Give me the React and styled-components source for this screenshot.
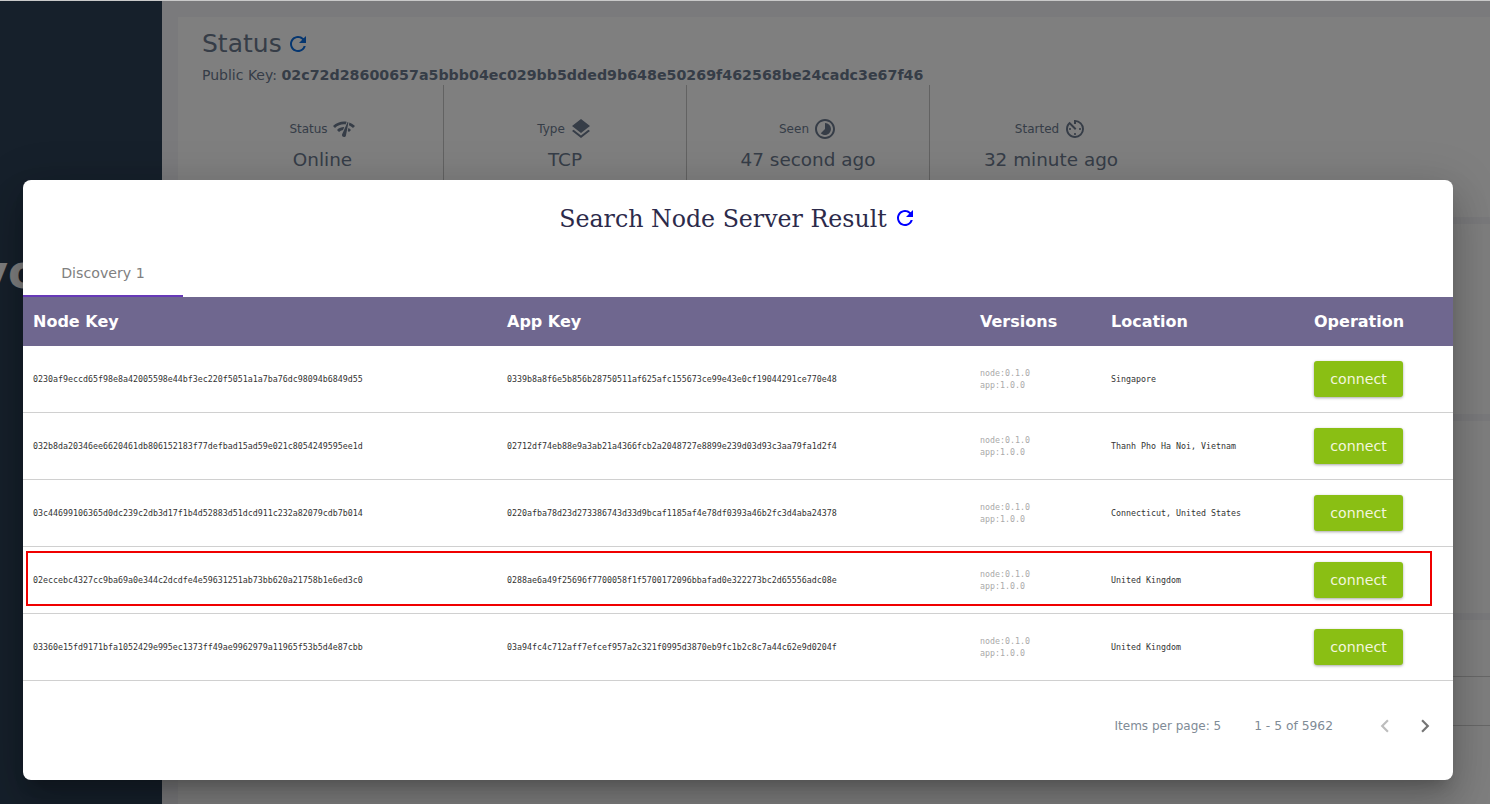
import React from 'react';
import styled, { createGlobalStyle } from 'styled-components';
import { MdRefresh, MdLayers, MdChevronLeft, MdChevronRight, MdNetworkCheck, MdTimelapse, MdAvTimer } from 'react-icons/md';

const GlobalStyle = createGlobalStyle`
  html, body {
    margin: 0;
    padding: 0;
    height: 100%;
    overflow: hidden;
    font-family: "DejaVu Sans", sans-serif;
  }
`;

const Page = styled.div`
  position: relative;
  display: flex;
  width: 1490px;
  height: 804px;
  overflow: hidden;
  background: #f4f5f8;
`;

const Sidebar = styled.aside`
  position: relative;
  width: 162px;
  flex: none;
  background: #2c4056;
`;

const BrandText = styled.div`
  position: absolute;
  left: -22px;
  top: 245px;
  font-size: 46px;
  line-height: 54px;
  font-weight: 700;
  color: #fff;
`;

const Main = styled.main`
  flex: 1;
  padding: 17px 0 0 16px;
  display: flex;
  flex-direction: column;
  gap: 7px;
`;

const Card = styled.section`
  background: #fff;
  height: ${p => p.$height}px;
  flex: none;
  padding: ${p => (p.$padded ? '11px 24px 0' : '0')};
  box-sizing: border-box;
`;

const CardRow = styled.div`
  height: ${p => p.$height}px;
  box-sizing: border-box;
  border-bottom: 1px solid #d0d0d0;
`;

const StatusHeading = styled.div`
  display: flex;
  align-items: center;
  gap: 4px;
  font-size: 25px;
  line-height: 32px;
  color: #6c7a8f;
`;

const RefreshIcon = styled(MdRefresh)`
  display: block;
  color: ${p => p.$color};
  font-size: ${p => p.$size}px;
`;

const KeyLine = styled.div`
  margin-top: 6px;
  font-size: 14px;
  line-height: 18px;
  color: #6c7a8f;
  b {
    font-size: 14.24px;
    font-weight: 700;
  }
`;

const Stats = styled.div`
  display: flex;
  margin-top: 1px;
`;

const Stat = styled.div`
  width: 243px;
  height: 100px;
  box-sizing: border-box;
  padding-top: 32px;
  text-align: center;
  color: #6c7a8f;
  &:first-child {
    width: 241px;
  }
  & + & {
    border-left: 1px solid #c4c4c4;
  }
`;

const StatLabel = styled.div`
  display: flex;
  justify-content: center;
  align-items: center;
  gap: 4px;
  height: 24px;
  font-size: 12px;
  svg {
    font-size: 24px;
  }
`;

const StatValue = styled.div`
  margin-top: 7px;
  font-size: 18.4px;
  line-height: 24px;
`;

const Overlay = styled.div`
  position: absolute;
  inset: 0;
  background: rgba(0, 0, 0, 0.5);
  border-top: 1px solid #c9c9c9;
  box-sizing: border-box;
`;

const Modal = styled.div`
  position: absolute;
  left: 23px;
  top: 180px;
  width: 1430px;
  height: 600px;
  background: #fff;
  border-radius: 8px;
  box-shadow: 0 11px 15px -7px rgba(0, 0, 0, 0.2), 0 24px 38px 3px rgba(0, 0, 0, 0.14), 0 9px 46px 8px rgba(0, 0, 0, 0.12);
  display: flex;
  flex-direction: column;
  overflow: hidden;
`;

const ModalTitle = styled.h2`
  margin: 0;
  padding-top: 23px;
  height: 64px;
  box-sizing: border-box;
  display: flex;
  justify-content: center;
  align-items: flex-start;
  gap: 6px;
  font-family: "DejaVu Serif", serif;
  font-size: 23.7px;
  line-height: 32px;
  font-weight: 400;
  color: #2c2a4a;
  svg {
    margin-top: 3px;
  }
`;

const TabBar = styled.div`
  display: flex;
  height: 53px;
`;

const Tab = styled.div`
  width: 160px;
  height: 53px;
  box-sizing: border-box;
  padding-top: 7px;
  display: flex;
  align-items: center;
  justify-content: center;
  border-bottom: 2px solid #673ab7;
  font-size: 14.2px;
  color: #808080;
`;

const Row = styled.div`
  display: grid;
  grid-template-columns: 474px 473px 131px 203px 1fr;
  align-items: center;
  padding-left: 10px;
  box-sizing: border-box;
`;

const HeadRow = styled(Row)`
  height: 49px;
  background: #6f678f;
  color: #fff;
  font-size: 16px;
  font-weight: 700;
`;

const BodyRow = styled(Row)`
  position: relative;
  height: 67px;
  border-bottom: 1px solid #d0d0d0;
  font-family: "DejaVu Sans Mono", monospace;
  font-size: 8.31px;
  color: #333;
`;

const Versions = styled.div`
  color: #aaa;
  line-height: 12px;
`;

const ConnectButton = styled.button`
  width: 89px;
  height: 36px;
  padding: 0 0 1px;
  border: none;
  border-radius: 3px;
  background: #8abf14;
  color: #f3f6df;
  font-family: "DejaVu Sans", sans-serif;
  font-size: 14.2px;
  box-shadow: 0 1px 3px rgba(0, 0, 0, 0.35);
`;

const Highlight = styled.div`
  position: absolute;
  left: 3px;
  right: 21px;
  top: 4px;
  bottom: 7px;
  border: 2px solid #f00000;
  pointer-events: none;
`;

const Pager = styled.div`
  display: flex;
  align-items: center;
  justify-content: flex-end;
  height: 90px;
  padding-right: 8px;
  font-size: 12px;
  color: #808b96;
`;

const PagerRange = styled.span`
  margin-left: 33px;
  margin-right: 32px;
  font-size: 12.3px;
`;

const PagerButton = styled.span`
  display: flex;
  width: 40px;
  justify-content: center;
  color: ${p => (p.$disabled ? '#bdbdbd' : '#757575')};
  font-size: 26px;
`;

const rows = [
  ['0230af9eccd65f98e8a42005598e44bf3ec220f5051a1a7ba76dc98094b6849d55', '0339b8a8f6e5b856b28750511af625afc155673ce99e43e0cf19044291ce770e48', 'Singapore'],
  ['032b8da20346ee6620461db806152183f77defbad15ad59e021c8054249595ee1d', '02712df74eb88e9a3ab21a4366fcb2a2048727e8899e239d03d93c3aa79fa1d2f4', 'Thanh Pho Ha Noi, Vietnam'],
  ['03c44699106365d0dc239c2db3d17f1b4d52883d51dcd911c232a82079cdb7b014', '0220afba78d23d273386743d33d9bcaf1185af4e78df0393a46b2fc3d4aba24378', 'Connecticut, United States'],
  ['02eccebc4327cc9ba69a0e344c2dcdfe4e59631251ab73bb620a21758b1e6ed3c0', '0288ae6a49f25696f7700058f1f5700172096bbafad0e322273bc2d65556adc08e', 'United Kingdom'],
  ['03360e15fd9171bfa1052429e995ec1373ff49ae9962979a11965f53b5d4e87cbb', '03a94fc4c712aff7efcef957a2c321f0995d3870eb9fc1b2c8c7a44c62e9d0204f', 'United Kingdom'],
];

const stats = [
  { label: 'Status', value: 'Online', Icon: MdNetworkCheck },
  { label: 'Type', value: 'TCP', Icon: MdLayers },
  { label: 'Seen', value: '47 second ago', Icon: MdTimelapse },
  { label: 'Started', value: '32 minute ago', Icon: MdAvTimer },
];

const App = () => (
  <Page>
    <GlobalStyle />
    <Sidebar>
      <BrandText>vo</BrandText>
    </Sidebar>
    <Main>
      <Card $height={200} $padded>
        <StatusHeading>
          Status <RefreshIcon $color="#0a6ce0" $size={24} />
        </StatusHeading>
        <KeyLine>
          Public Key: <b>02c72d28600657a5bbb04ec029bb5dded9b648e50269f462568be24cadc3e67f46</b>
        </KeyLine>
        <Stats>
          {stats.map(({ label, value, Icon }) => (
            <Stat key={label}>
              <StatLabel>
                {label} <Icon />
              </StatLabel>
              <StatValue>{value}</StatValue>
            </Stat>
          ))}
        </Stats>
      </Card>
      <Card $height={190} />
      <Card $height={192} />
      <Card $height={184}>
        <CardRow $height={57} />
        <CardRow $height={49} />
      </Card>
    </Main>
    <Overlay />
    <Modal>
      <ModalTitle>
        Search Node Server Result <RefreshIcon $color="#0000ff" $size={24} />
      </ModalTitle>
      <TabBar>
        <Tab>Discovery 1</Tab>
      </TabBar>
      <HeadRow>
        <div>Node Key</div>
        <div>App Key</div>
        <div>Versions</div>
        <div>Location</div>
        <div>Operation</div>
      </HeadRow>
      {rows.map(([nodeKey, appKey, location], i) => (
        <BodyRow key={nodeKey}>
          <div>{nodeKey}</div>
          <div>{appKey}</div>
          <Versions>
            node:0.1.0
            <br />
            app:1.0.0
          </Versions>
          <div>{location}</div>
          <div>
            <ConnectButton>connect</ConnectButton>
          </div>
          {i === 3 && <Highlight />}
        </BodyRow>
      ))}
      <Pager>
        Items per page: 5
        <PagerRange>1 - 5 of 5962</PagerRange>
        <PagerButton $disabled>
          <MdChevronLeft />
        </PagerButton>
        <PagerButton>
          <MdChevronRight />
        </PagerButton>
      </Pager>
    </Modal>
  </Page>
);

export default App;
